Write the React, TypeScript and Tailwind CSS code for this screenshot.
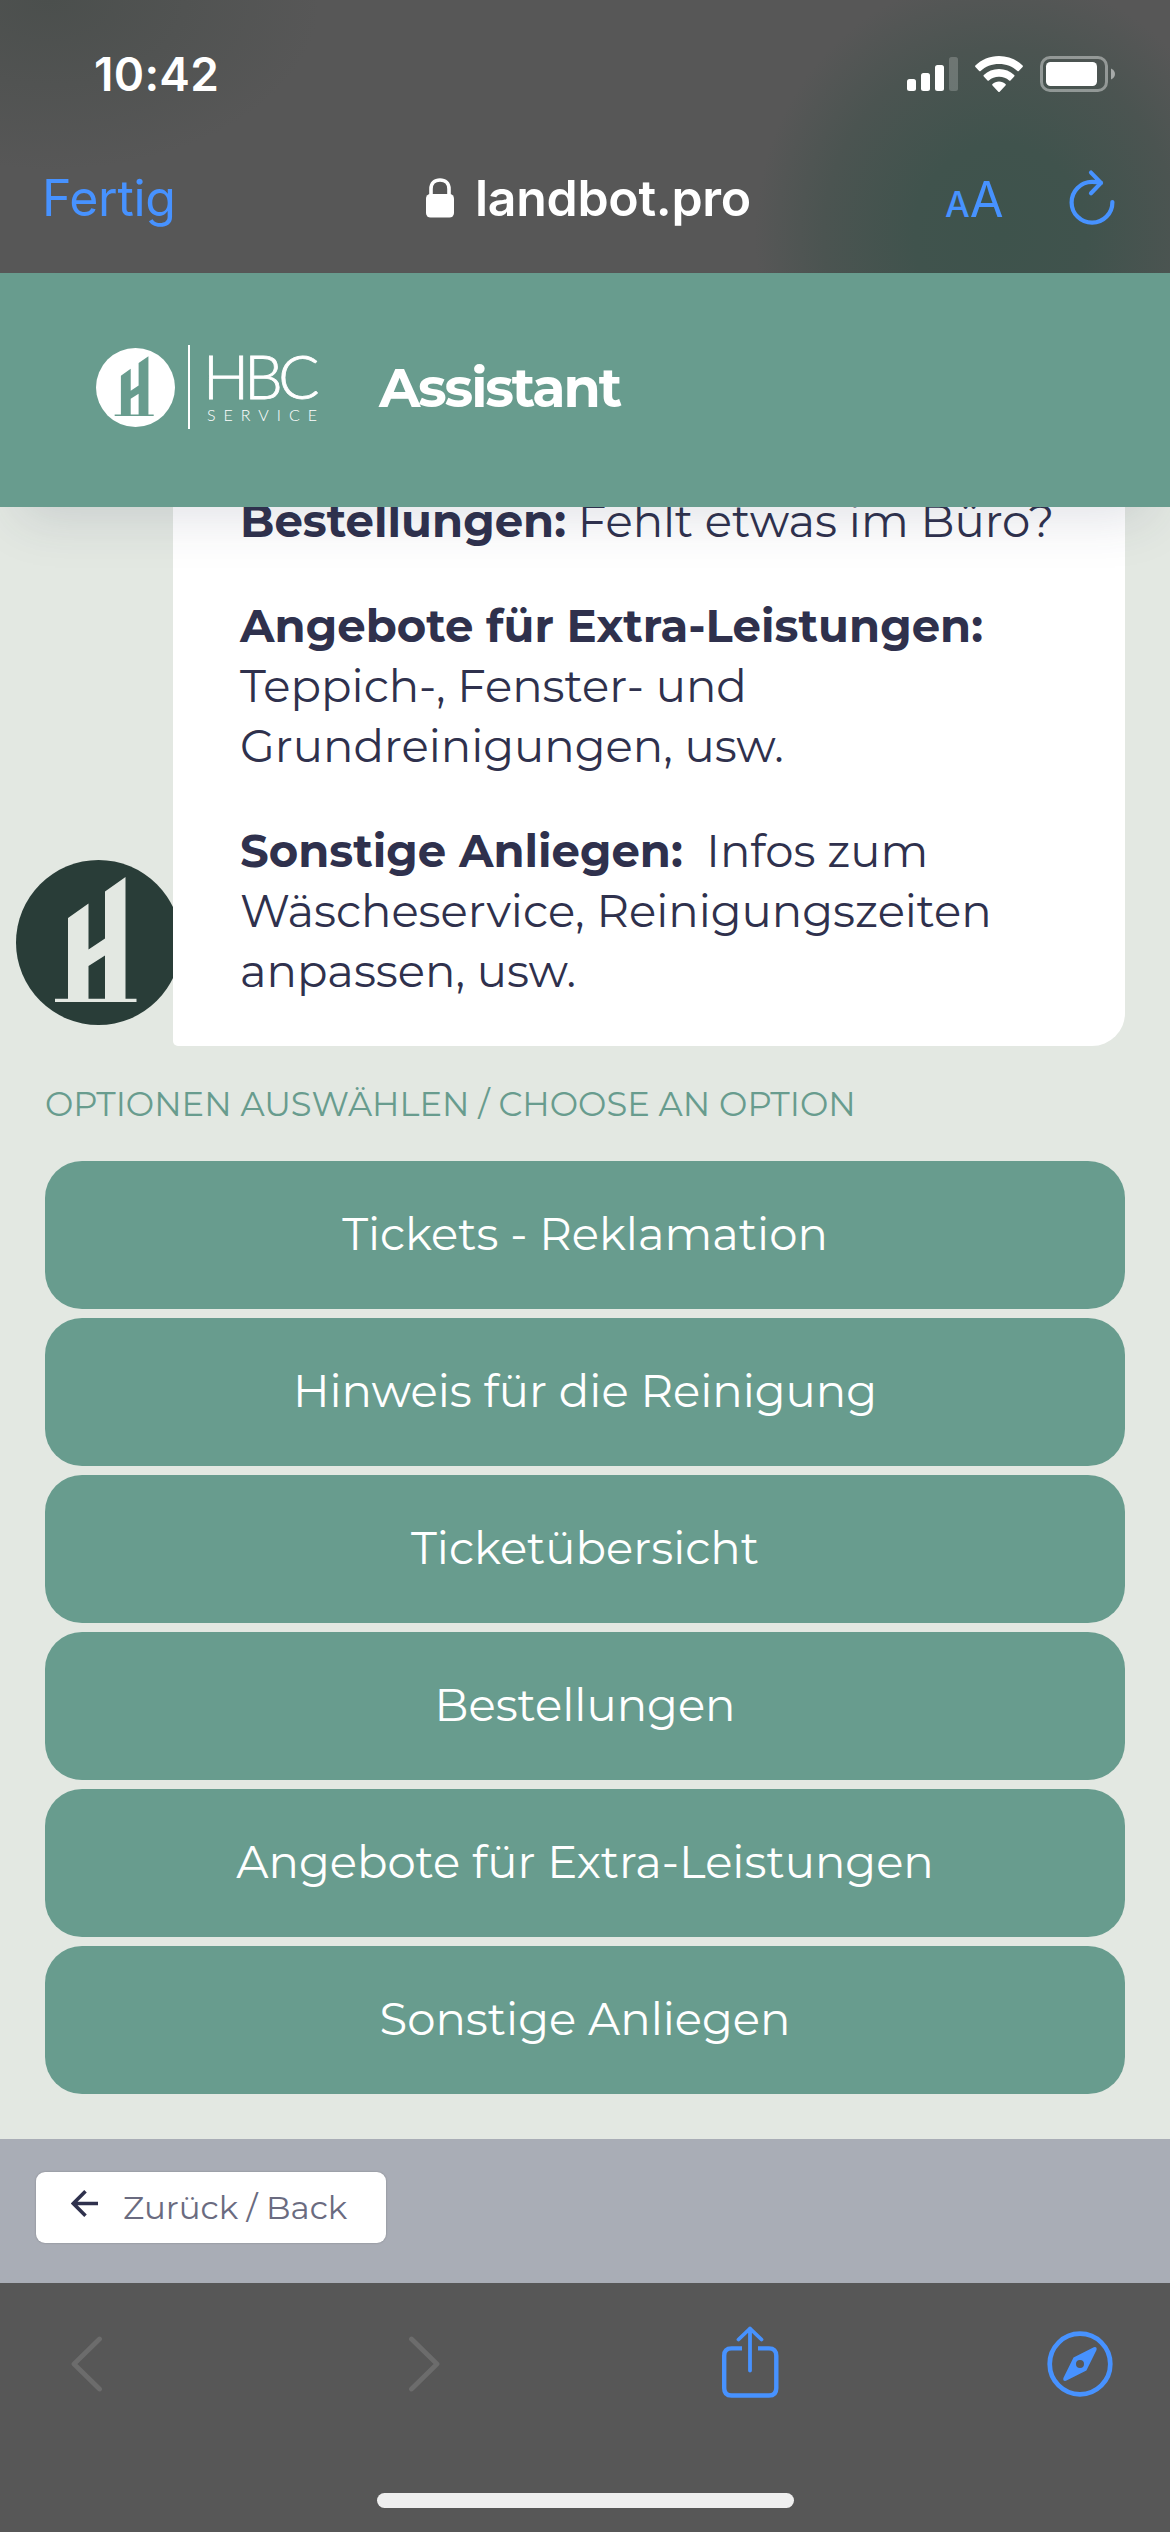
import type { ReactNode } from 'react'

interface MessageProps {
  title: string
  children: ReactNode
}

const options = [
  'Tickets - Reklamation',
  'Hinweis für die Reinigung',
  'Ticketübersicht',
  'Bestellungen',
  'Angebote für Extra-Leistungen',
  'Sonstige Anliegen',
]

function BuildingMark({ className, disc, mark }: { className: string; disc: string; mark: string }) {
  return (
    <svg viewBox="0 0 165 165" className={className}>
      <circle cx="82.5" cy="82.5" r="82.5" fill={disc} />
      <path
        fill={mark}
        d="M52 58L72.5 43.5V89.5L89 78.5V31.5L109.5 17V138.7H120.5V142H39V138.7H52ZM72.5 106V138.7H89V95.5Z"
      />
    </svg>
  )
}

function StatusBar() {
  return (
    <div className="flex h-[148px] items-center pl-[94px] text-white">
      <span className="w-[813px] text-[46px] leading-none font-semibold tracking-[0.3px]">10:42</span>
      <svg viewBox="0 0 51 34" className="w-[51px] h-[34px]" fill="currentColor">
        <rect x="0" y="22" width="9" height="12" rx="2.5" />
        <rect x="14" y="16" width="9" height="18" rx="2.5" />
        <rect x="28" y="8" width="9" height="26" rx="2.5" />
        <rect x="42" y="0" width="9" height="34" rx="2.5" opacity="0.2" />
      </svg>
      <svg viewBox="0 0 48 38" className="ml-[17px] w-[48px] h-[38px]" fill="currentColor">
        <path d="M24 1C14.7 1 6.3 4.7.4 10.6a1 1 0 0 0 0 1.4l3.8 4a1 1 0 0 0 1.4 0C10.3 11.4 16.8 8.9 24 8.9s13.7 2.5 18.4 7.1a1 1 0 0 0 1.4 0l3.8-4a1 1 0 0 0 0-1.4C41.7 4.7 33.3 1 24 1Z" />
        <path d="M24 14c-5.9 0-11.2 2.2-15.2 5.9a1 1 0 0 0 0 1.5l3.7 4a1 1 0 0 0 1.4 0A15 15 0 0 1 24 21.7a15 15 0 0 1 10.1 3.7 1 1 0 0 0 1.4 0l3.7-4a1 1 0 0 0 0-1.5C35.2 16.2 29.9 14 24 14Z" />
        <path d="M24 26.5c-2.5 0-4.8 1-6.5 2.5a1 1 0 0 0 0 1.5l5.8 6.2a1 1 0 0 0 1.4 0l5.8-6.2a1 1 0 0 0 0-1.5c-1.7-1.5-4-2.5-6.5-2.5Z" />
      </svg>
      <svg viewBox="0 0 76 36" className="ml-[17px] w-[76px] h-[36px]" fill="currentColor">
        <rect x="1.5" y="1.5" width="65" height="33" rx="8.5" fill="none" stroke="currentColor" strokeWidth="3" opacity="0.4" />
        <rect x="6" y="6" width="51" height="24" rx="4.5" />
        <path d="M71 12.5c2.5 1 4 3.2 4 5.5s-1.5 4.5-4 5.5Z" opacity="0.5" />
      </svg>
    </div>
  )
}

function AddressBar() {
  return (
    <div className="flex h-[100px] items-center text-[50px] leading-none text-[#4792ff]">
      <span className="w-[426px] pl-[42px] tracking-[-0.3px]">Fertig</span>
      <svg viewBox="0 0 28 40" className="w-[28px] h-[40px] text-white" fill="currentColor">
        <rect x="0" y="16" width="28" height="23.5" rx="4.5" />
        <path d="M5 18V11C5 5.3 8.7 2 14 2s9 3.3 9 9v7" fill="none" stroke="currentColor" strokeWidth="3.6" />
      </svg>
      <span className="w-[491px] pl-[21px] font-semibold tracking-[-0.3px] text-white">landbot.pro</span>
      <span className="flex w-[57px] items-baseline justify-between pt-[2px]">
        <span className="text-[35px] font-medium">A</span>
        <span className="text-[49px] tracking-[-1px]">A</span>
      </span>
      <svg viewBox="0 0 48 58" className="ml-[66px] w-[48px] h-[58px]" fill="none" stroke="currentColor" strokeWidth="4.2" strokeLinecap="round" strokeLinejoin="round">
        <path d="M44.4 33A20.4 20.4 0 1 1 24 12.9C27 12.9 30 13.2 33 13.9M23 3.6L33 13.9L23 24.2" />
      </svg>
    </div>
  )
}

function ChatHeader() {
  return (
    <header className="relative z-10 h-[234px] bg-[#689c8e] text-white shadow-[0_30px_50px_-20px_rgba(50,55,85,0.15)]">
      <div className="flex h-[228px] items-center pl-[96px]">
        <BuildingMark className="w-[79px] h-[79px]" disc="#ffffff" mark="#689c8e" />
        <div className="ml-[13px] w-[2px] h-[84px] bg-white" />
        <div className="ml-[13px] w-[176px] pb-[6px] font-[Lato] font-light">
          <p className="text-[61px] leading-[62px] tracking-[-4.7px] [-webkit-text-stroke:0.8px_white]">HBC</p>
          <p className="pl-[4px] text-[16px] leading-[16px] tracking-[8px]">SERVICE</p>
        </div>
        <h1 className="pt-[2px] font-[Montserrat,Inter,sans-serif] text-[54px] font-bold leading-none tracking-[-2.1px]">Assistant</h1>
      </div>
    </header>
  )
}

function Message({ title, children }: MessageProps) {
  return (
    <p>
      <strong className="font-bold">{title}</strong> {children}
    </p>
  )
}

function OptionButton({ label }: { label: string }) {
  return (
    <button className="h-[148px] rounded-[37px] bg-[#689c8e] pb-[3px] text-[45px] leading-none text-white">{label}</button>
  )
}

function Toolbar() {
  return (
    <nav className="h-[249px] bg-[#575757] text-[#4792ff]">
      <div className="flex h-[162px] items-center pl-[71px]">
        <svg viewBox="0 0 31 56" className="w-[31px] h-[56px] text-[#6c6c6c]" fill="none" stroke="currentColor" strokeWidth="4.8" strokeLinecap="round" strokeLinejoin="round">
          <path d="M28.5 3L3 28L28.5 53" />
        </svg>
        <svg viewBox="0 0 31 56" className="ml-[307px] w-[31px] h-[56px] text-[#6c6c6c]" fill="none" stroke="currentColor" strokeWidth="4.8" strokeLinecap="round" strokeLinejoin="round">
          <path d="M2.5 3L28 28L2.5 53" />
        </svg>
        <svg viewBox="0 0 57 76" className="ml-[282px] w-[57px] h-[76px]" fill="none" stroke="currentColor" strokeWidth="4.4">
          <path d="M20 22.4H9.5Q2.2 22.4 2.2 29.7V62.2Q2.2 69.5 9.5 69.5H47Q54.3 69.5 54.3 62.2V29.7Q54.3 22.4 47 22.4H36" />
          <path d="M28 44.5V2.5M16.5 13.5L28 2.5L39.5 13.5" strokeWidth="3.8" strokeLinecap="round" strokeLinejoin="round" />
        </svg>
        <svg viewBox="0 0 66 66" className="ml-[268px] w-[66px] h-[66px]" fill="currentColor">
          <circle cx="33" cy="33" r="30.3" fill="none" stroke="currentColor" strokeWidth="4.7" />
          <path
            fillRule="evenodd"
            d="M26.5 26.6L46.8 16.2Q50.3 15.4 49.5 19L39.4 39.4L19 49.8Q15.6 50.5 16.4 47ZM33 29a4 4 0 1 0 0 8a4 4 0 1 0 0-8Z"
          />
        </svg>
      </div>
      <div className="mx-auto mt-12 w-[417px] h-[15px] rounded-full bg-[#efefef]" />
    </nav>
  )
}

export default function App() {
  return (
    <div className="flex w-[1170px] h-[2532px] flex-col overflow-hidden bg-[#e3e8e2] font-[Inter,sans-serif]">
      {/* Browser chrome */}
      <div className="h-[273px] shrink-0 bg-[#575757] bg-[radial-gradient(ellipse_245px_260px_at_1000px_235px,#3e534c_0%,#40534d_35%,#4b5451_72%,transparent_100%),radial-gradient(ellipse_270px_170px_at_50px_0px,#4b4f4d_0%,transparent_100%)]">
        <StatusBar />
        <AddressBar />
      </div>

      <ChatHeader />

      {/* Conversation, scrolled so the first message sits partly under the header */}
      <main className="h-[1632px] shrink-0 overflow-hidden font-[Montserrat,Inter,sans-serif]">
        <div className="-mt-[61px] flex items-end">
          <div className="w-[173px] overflow-hidden pb-[21px] pl-[16px]">
            <BuildingMark className="w-[165px] h-[165px] max-w-none" disc="#293d38" mark="#e3e8e2" />
          </div>
          <div className="w-[952px] space-y-[45px] rounded-br-[33px] rounded-bl-[5px] bg-white py-[45px] pl-[67px] text-[45px] leading-[60px] text-[#2f314d]">
            <Message title="Bestellungen:">Fehlt etwas im Büro?</Message>
            <Message title="Angebote für Extra-Leistungen:">
              <br />
              Teppich-, Fenster- und
              <br />
              Grundreinigungen, usw.
            </Message>
            <Message title="Sonstige Anliegen:">
              &nbsp;Infos zum
              <br />
              Wäscheservice, Reinigungszeiten
              <br />
              anpassen, usw.
            </Message>
          </div>
        </div>

        <div className="mt-[43px] px-[45px]">
          <p className="text-[33.75px] leading-[30px] text-[#689c8e]">OPTIONEN AUSWÄHLEN / CHOOSE AN OPTION</p>
          <div className="mt-[42px] flex flex-col gap-[9px]">
            {options.map((option) => (
              <OptionButton key={option} label={option} />
            ))}
          </div>
        </div>
      </main>

      <div className="h-[144px] shrink-0 bg-[#a9adb6] pt-[33px] pl-[36px]">
        <button className="flex w-[350px] h-[71px] items-center rounded-[9px] bg-white pl-[35px] font-[Montserrat,Inter,sans-serif] text-[32.5px] leading-none text-[#6a6b80] shadow-[0_0_2px_rgba(0,0,0,0.25)]">
          <svg viewBox="0 0 27 27" className="-mt-[8px] mr-[25px] w-[27px] h-[27px]" fill="none" stroke="#2f314d" strokeWidth="3.6">
            <path d="M27 13.5H2.5M14.5 1.3L2.3 13.5L14.5 25.7" />
          </svg>
          <span className="pt-[2px]">Zurück / Back</span>
        </button>
      </div>

      <Toolbar />
    </div>
  )
}
